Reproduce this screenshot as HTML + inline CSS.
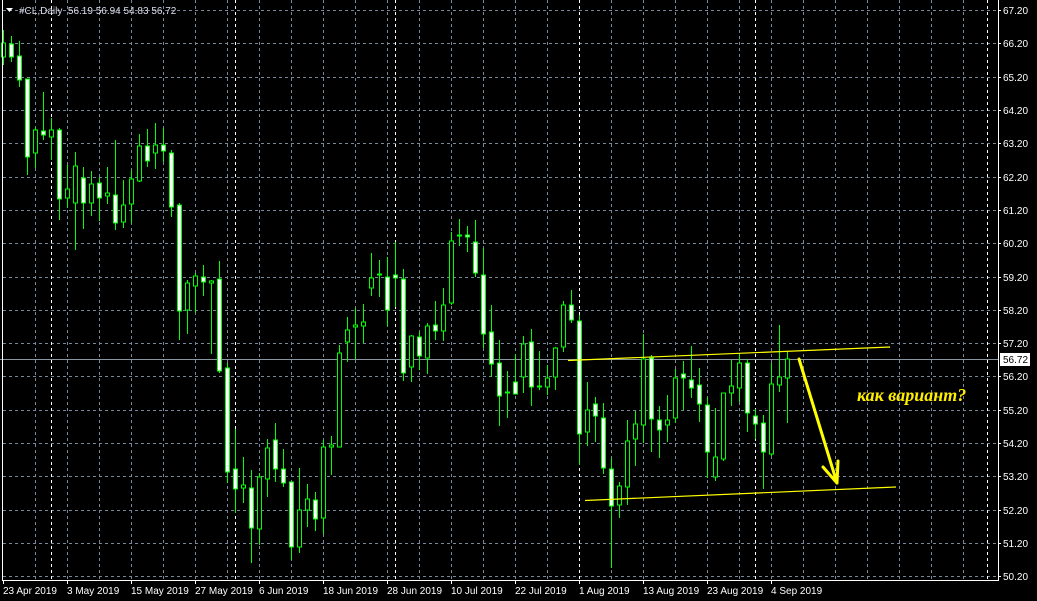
<!DOCTYPE html>
<html><head><meta charset="utf-8"><style>
html,body{margin:0;padding:0;background:#000;width:1037px;height:601px;overflow:hidden}
svg{display:block}
text{font-family:"Liberation Sans",sans-serif;font-size:10px;fill:#fff}
.g{stroke:#778899;stroke-width:1;stroke-dasharray:3,3;fill:none}
.s{stroke:#fff;stroke-width:1;stroke-dasharray:3,3;fill:none}
.c path{stroke:#00ff00;stroke-width:1}
.c rect{stroke:#00ff00;stroke-width:1;fill:#000}
.c rect.w{fill:#fff}
</style></head><body>
<svg width="1037" height="601" viewBox="0 0 1037 601" xmlns="http://www.w3.org/2000/svg">
<rect width="1037" height="601" fill="#000"/>
<g class="g">
<path d="M3 10.5H997M3 43.5H997M3 77.5H997M3 110.5H997M3 143.5H997M3 177.5H997M3 210.5H997M3 243.5H997M3 277.5H997M3 310.5H997M3 343.5H997M3 376.5H997M3 410.5H997M3 443.5H997M3 476.5H997M3 510.5H997M3 543.5H997M3 576.5H997"/>
<path d="M35.5 0V580M67.5 0V580M99.5 0V580M131.5 0V580M163.5 0V580M195.5 0V580M227.5 0V580M259.5 0V580M291.5 0V580M323.5 0V580M355.5 0V580M387.5 0V580M419.5 0V580M451.5 0V580M483.5 0V580M515.5 0V580M547.5 0V580M579.5 0V580M611.5 0V580M643.5 0V580M675.5 0V580M707.5 0V580M739.5 0V580M771.5 0V580M803.5 0V580M835.5 0V580M867.5 0V580M899.5 0V580M931.5 0V580M963.5 0V580"/>
</g>
<path class="s" d="M51.5 0V580M235.5 0V580M395.5 0V580M579.5 0V580M755.5 0V580M987.5 0V580"/>
<path d="M0 359.5H998" stroke="#8a96a0" stroke-width="1"/>
<g class="c">
<path d="M3.5 30V65"/><rect x="1.5" y="43" width="4" height="14"/>
<path d="M11.5 36V62"/><rect class="w" x="9.5" y="44" width="4" height="13"/>
<path d="M19.5 41V87"/><rect class="w" x="17.5" y="56" width="4" height="24"/>
<path d="M27.5 79V175"/><rect class="w" x="25.5" y="79" width="4" height="78"/>
<path d="M35.5 127V168"/><rect x="33.5" y="130" width="4" height="23"/>
<path d="M43.5 92V140"/><rect class="w" x="41.5" y="131" width="4" height="4"/>
<path d="M51.5 118V160"/><rect x="49.5" y="130" width="4" height="7"/>
<path d="M59.5 128V220"/><rect class="w" x="57.5" y="130" width="4" height="69"/>
<path d="M67.5 165V208"/><rect x="65.5" y="189" width="4" height="9"/>
<path d="M75.5 152V250"/><rect x="73.5" y="166" width="4" height="37"/>
<path d="M83.5 167V229"/><rect class="w" x="81.5" y="178" width="4" height="25"/>
<path d="M91.5 171V216"/><rect x="89.5" y="184" width="4" height="19"/>
<path d="M99.5 177V221"/><rect class="w" x="97.5" y="183" width="4" height="15"/>
<path d="M107.5 167V204"/><rect x="105.5" y="193" width="4" height="3"/>
<path d="M115.5 140V230"/><rect class="w" x="113.5" y="195" width="4" height="28"/>
<path d="M123.5 180V228"/><rect x="121.5" y="205" width="4" height="17"/>
<path d="M131.5 170V223"/><rect x="129.5" y="179" width="4" height="25"/>
<path d="M139.5 134V182"/><rect x="137.5" y="146" width="4" height="35"/>
<path d="M147.5 129V167"/><rect class="w" x="145.5" y="146" width="4" height="15"/>
<path d="M155.5 123V169"/><rect x="153.5" y="145" width="4" height="8"/>
<path d="M163.5 128V162"/><rect class="w" x="161.5" y="145" width="4" height="6"/>
<path d="M171.5 150V217"/><rect class="w" x="169.5" y="153" width="4" height="54"/>
<path d="M179.5 203V340"/><rect class="w" x="177.5" y="205" width="4" height="106"/>
<path d="M187.5 280V334"/><rect x="185.5" y="283" width="4" height="27"/>
<path d="M195.5 273V313"/><rect x="193.5" y="276" width="4" height="10"/>
<path d="M203.5 265V296"/><rect class="w" x="201.5" y="277" width="4" height="5"/>
<path d="M211.5 280V354"/><rect x="209.5" y="281" width="4" height="2"/>
<path d="M219.5 261V373"/><rect class="w" x="217.5" y="279" width="4" height="92"/>
<path d="M227.5 363V483"/><rect class="w" x="225.5" y="368" width="4" height="104"/>
<path d="M235.5 429V513"/><rect class="w" x="233.5" y="469" width="4" height="20"/>
<path d="M243.5 457V503"/><rect x="241.5" y="485" width="4" height="3"/>
<path d="M251.5 470V563"/><rect class="w" x="249.5" y="488" width="4" height="40"/>
<path d="M259.5 473V545"/><rect x="257.5" y="477" width="4" height="52"/>
<path d="M267.5 439V497"/><rect x="265.5" y="448" width="4" height="31"/>
<path d="M275.5 423V482"/><rect class="w" x="273.5" y="440" width="4" height="29"/>
<path d="M283.5 449V487"/><rect class="w" x="281.5" y="469" width="4" height="14"/>
<path d="M291.5 482V560"/><rect class="w" x="289.5" y="482" width="4" height="65"/>
<path d="M299.5 468V553"/><rect x="297.5" y="510" width="4" height="37"/>
<path d="M307.5 484V527"/><rect x="305.5" y="499" width="4" height="11"/>
<path d="M315.5 492V531"/><rect class="w" x="313.5" y="500" width="4" height="19"/>
<path d="M323.5 440V534"/><rect x="321.5" y="447" width="4" height="71"/>
<path d="M331.5 436V475"/><rect x="329.5" y="445" width="4" height="2"/>
<path d="M339.5 345V447"/><rect x="337.5" y="353" width="4" height="94"/>
<path d="M347.5 317V362"/><rect x="345.5" y="330" width="4" height="12"/>
<path d="M355.5 308V359"/><rect x="353.5" y="325" width="4" height="2"/>
<path d="M363.5 304V343"/><rect x="361.5" y="322" width="4" height="4"/>
<path d="M371.5 253V296"/><rect x="369.5" y="278" width="4" height="10"/>
<path d="M379.5 260V297"/><rect x="377.5" y="274" width="4" height="1"/>
<path d="M387.5 257V326"/><rect class="w" x="385.5" y="277" width="4" height="33"/>
<path d="M395.5 242V307"/><rect class="w" x="393.5" y="275" width="4" height="3"/>
<path d="M403.5 269V381"/><rect class="w" x="401.5" y="279" width="4" height="94"/>
<path d="M411.5 335V382"/><rect x="409.5" y="336" width="4" height="31"/>
<path d="M419.5 332V370"/><rect class="w" x="417.5" y="337" width="4" height="19"/>
<path d="M427.5 323V374"/><rect x="425.5" y="326" width="4" height="32"/>
<path d="M435.5 301V340"/><rect class="w" x="433.5" y="325" width="4" height="6"/>
<path d="M443.5 288V341"/><rect x="441.5" y="305" width="4" height="26"/>
<path d="M451.5 232V305"/><rect x="449.5" y="241" width="4" height="62"/>
<path d="M459.5 219V246"/><rect x="457.5" y="235" width="4" height="1"/>
<path d="M467.5 226V252"/><rect class="w" x="465.5" y="235" width="4" height="2"/>
<path d="M475.5 220V277"/><rect class="w" x="473.5" y="242" width="4" height="31"/>
<path d="M483.5 248V348"/><rect class="w" x="481.5" y="275" width="4" height="59"/>
<path d="M491.5 305V377"/><rect class="w" x="489.5" y="332" width="4" height="32"/>
<path d="M499.5 340V426"/><rect class="w" x="497.5" y="363" width="4" height="33"/>
<path d="M507.5 371V418"/><rect x="505.5" y="392" width="4" height="1"/>
<path d="M515.5 354V394"/><rect class="w" x="513.5" y="382" width="4" height="12"/>
<path d="M523.5 336V393"/><rect x="521.5" y="344" width="4" height="33"/>
<path d="M531.5 329V406"/><rect class="w" x="529.5" y="342" width="4" height="45"/>
<path d="M539.5 351V390"/><rect x="537.5" y="386" width="4" height="1"/>
<path d="M547.5 365V395"/><rect x="545.5" y="378" width="4" height="9"/>
<path d="M555.5 347V390"/><rect x="553.5" y="348" width="4" height="29"/>
<path d="M563.5 301V352"/><rect x="561.5" y="305" width="4" height="42"/>
<path d="M571.5 290V323"/><rect class="w" x="569.5" y="305" width="4" height="15"/>
<path d="M579.5 315V465"/><rect class="w" x="577.5" y="321" width="4" height="113"/>
<path d="M587.5 382V446"/><rect x="585.5" y="410" width="4" height="22"/>
<path d="M595.5 397V442"/><rect class="w" x="593.5" y="404" width="4" height="12"/>
<path d="M603.5 403V474"/><rect class="w" x="601.5" y="418" width="4" height="50"/>
<path d="M611.5 458V568"/><rect class="w" x="609.5" y="469" width="4" height="37"/>
<path d="M619.5 482V518"/><rect x="617.5" y="486" width="4" height="19"/>
<path d="M627.5 420V505"/><rect x="625.5" y="441" width="4" height="46"/>
<path d="M635.5 411V466"/><rect x="633.5" y="424" width="4" height="15"/>
<path d="M643.5 334V443"/><rect x="641.5" y="359" width="4" height="66"/>
<path d="M651.5 355V452"/><rect class="w" x="649.5" y="358" width="4" height="61"/>
<path d="M659.5 406V458"/><rect class="w" x="657.5" y="420" width="4" height="10"/>
<path d="M667.5 395V442"/><rect x="665.5" y="420" width="4" height="5"/>
<path d="M675.5 369V423"/><rect x="673.5" y="378" width="4" height="40"/>
<path d="M683.5 361V410"/><rect class="w" x="681.5" y="374" width="4" height="4"/>
<path d="M691.5 346V398"/><rect class="w" x="689.5" y="380" width="4" height="8"/>
<path d="M699.5 368V422"/><rect class="w" x="697.5" y="385" width="4" height="19"/>
<path d="M707.5 397V478"/><rect class="w" x="705.5" y="405" width="4" height="47"/>
<path d="M715.5 408V481"/><rect x="713.5" y="457" width="4" height="20"/>
<path d="M723.5 393V461"/><rect x="721.5" y="393" width="4" height="66"/>
<path d="M731.5 360V406"/><rect x="729.5" y="386" width="4" height="7"/>
<path d="M739.5 353V402"/><rect x="737.5" y="363" width="4" height="25"/>
<path d="M747.5 359V432"/><rect class="w" x="745.5" y="363" width="4" height="50"/>
<path d="M755.5 409V439"/><rect class="w" x="753.5" y="416" width="4" height="8"/>
<path d="M763.5 415V489"/><rect class="w" x="761.5" y="423" width="4" height="29"/>
<path d="M771.5 363V456"/><rect x="769.5" y="384" width="4" height="70"/>
<path d="M779.5 325V392"/><rect x="777.5" y="377" width="4" height="8"/>
<path d="M787.5 352V423"/><rect x="785.5" y="359" width="4" height="19"/>
</g>
<g stroke="#ffff00" fill="none">
<path d="M568 360.5L890 347" stroke-width="1.2"/>
<path d="M585 500.5L896 487" stroke-width="1.2"/>
<path d="M799 359L837 483M837 483L823 467M837 483L838 461" stroke-width="3" stroke-linecap="round"/>
</g>
<text x="857" y="401" style="font-family:'Liberation Serif',serif;font-size:18px;font-style:italic;font-weight:bold;fill:#ffee00">как вариант?</text>
<path d="M2.5 0V580.5H998.5V0" stroke="#fff" fill="none"/>
<g stroke="#fff">
<path d="M998 10.5h3M998 43.5h3M998 77.5h3M998 110.5h3M998 143.5h3M998 177.5h3M998 210.5h3M998 243.5h3M998 277.5h3M998 310.5h3M998 343.5h3M998 376.5h3M998 410.5h3M998 443.5h3M998 476.5h3M998 510.5h3M998 543.5h3M998 576.5h3"/>
<path d="M3.5 580v4M67.5 580v4M131.5 580v4M195.5 580v4M259.5 580v4M323.5 580v4M387.5 580v4M451.5 580v4M515.5 580v4M579.5 580v4M643.5 580v4M707.5 580v4M771.5 580v4"/>
</g>
<g>
<text x="1003" y="14">67.20</text><text x="1003" y="47">66.20</text><text x="1003" y="81">65.20</text><text x="1003" y="114">64.20</text><text x="1003" y="147">63.20</text><text x="1003" y="181">62.20</text><text x="1003" y="214">61.20</text><text x="1003" y="247">60.20</text><text x="1003" y="281">59.20</text><text x="1003" y="314">58.20</text><text x="1003" y="347">57.20</text><text x="1003" y="380">56.20</text><text x="1003" y="414">55.20</text><text x="1003" y="447">54.20</text><text x="1003" y="480">53.20</text><text x="1003" y="514">52.20</text><text x="1003" y="547">51.20</text><text x="1003" y="580">50.20</text>
</g>
<rect x="1000" y="353" width="30" height="13" fill="#fff"/>
<text x="1003" y="363" style="fill:#000">56.72</text>
<g>
<text x="3" y="594">23 Apr 2019</text><text x="67" y="594">3 May 2019</text><text x="131" y="594">15 May 2019</text><text x="195" y="594">27 May 2019</text><text x="259" y="594">6 Jun 2019</text><text x="323" y="594">18 Jun 2019</text><text x="387" y="594">28 Jun 2019</text><text x="451" y="594">10 Jul 2019</text><text x="515" y="594">22 Jul 2019</text><text x="579" y="594">1 Aug 2019</text><text x="643" y="594">13 Aug 2019</text><text x="707" y="594">23 Aug 2019</text><text x="771" y="594">4 Sep 2019</text>
</g>
<path d="M6 8h7l-3.5 4z" fill="#fff"/>
<text x="19" y="14" style="fill:#dde">#CL,Daily&#160;&#160;56.19 56.94 54.83 56.72</text>
</svg>
</body></html>
